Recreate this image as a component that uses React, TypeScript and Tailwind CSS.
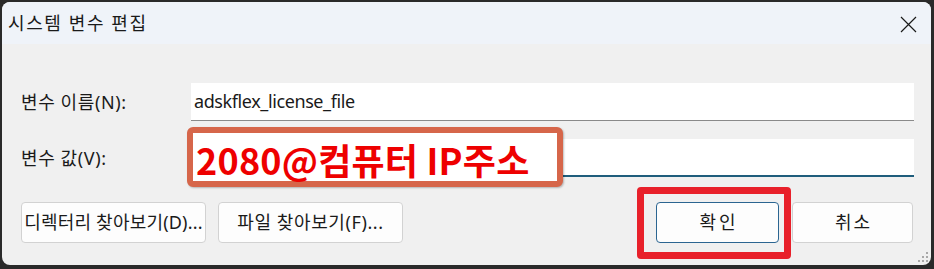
import React from "react";

const font = { fontFamily: '"Noto Sans", "Noto Sans CJK KR", sans-serif' };

export default function App() {
  return (
    <div
      className="w-[934px] h-[269px] bg-[#2a2a2a] pt-[2px] pl-[2px] overflow-hidden"
      style={font}
    >
      <div className="relative w-[929px] h-[263px] rounded-[8px] overflow-hidden bg-[#f0f0f0] flex flex-col">
        {/* Title bar */}
        <div className="h-[42px] bg-[#eff3f9] flex items-center justify-between pl-[6px] pr-[14px] shrink-0">
          <span className="text-[18px] text-[#1a1a1a] leading-none tracking-[1.6px]">시스템 변수 편집</span>
          <svg width="17" height="17" viewBox="0 0 17 17" className="mt-[2px]">
            <path d="M1 1 L16 16 M16 1 L1 16" stroke="#1a1a1a" strokeWidth="1.2" fill="none" />
          </svg>
        </div>

        {/* Body */}
        <div className="flex flex-col pl-[19px] pr-[17px] pt-[39px]">
          <div className="flex items-center h-[38px]">
            <div className="w-[170px] text-[18px] text-[#1a1a1a] leading-none tracking-[0.6px]">변수 이름(N):</div>
            <div className="flex-1 h-[38px] bg-white border-b border-[#8a8a8a] flex items-center pl-[3px] text-[18px] text-[#1a1a1a] tracking-[-0.4px]">
              adskflex_license_file
            </div>
          </div>
          <div className="flex items-center h-[38px] mt-[18px]">
            <div className="w-[170px] text-[18px] text-[#1a1a1a] leading-none tracking-[0.6px]">변수 값(V):</div>
            <div className="flex-1 h-[38px] bg-white border-b-2 border-[#1f5d7c]" />
          </div>

          {/* Buttons */}
          <div className="flex items-center mt-[25px] pr-[1px]">
            <button className="w-[185px] h-[41px] bg-[#fdfdfd] border border-[#d2d2d2] rounded-[4px] text-[18px] text-[#1a1a1a] whitespace-nowrap overflow-hidden flex items-center justify-center tracking-[0.2px]">
              디렉터리 찾아보기(D)...
            </button>
            <button className="ml-[12px] w-[185px] h-[41px] bg-[#fdfdfd] border border-[#d2d2d2] rounded-[4px] text-[18px] text-[#1a1a1a] whitespace-nowrap flex items-center justify-center tracking-[0.6px]">
              파일 찾아보기(F)...
            </button>
            <div className="flex-1" />
            <button className="w-[123px] h-[41px] bg-[#fdfdfd] border border-[#2b6591] rounded-[4px] text-[18px] text-[#1a1a1a] flex items-center justify-center tracking-[3px] pl-[3px]">
              확인
            </button>
            <button className="ml-[13px] w-[121px] h-[41px] bg-[#fdfdfd] border border-[#d2d2d2] rounded-[4px] text-[18px] text-[#1a1a1a] flex items-center justify-center tracking-[2px] pl-[2px]">
              취소
            </button>
          </div>
        </div>

        {/* Annotation overlay box */}
        <div
          className="absolute left-[185px] top-[125px] w-[376px] h-[60px] bg-white border-[6px] border-[#d6664a] rounded-[6px] shadow-[1px_1px_2px_rgba(0,0,0,0.25)] flex items-center pl-[3px]"
        >
          <span
            className="text-[36px] font-bold text-[#ee0000] leading-none whitespace-nowrap tracking-[0.2px] mt-[3px]"
            style={{ fontFamily: '"Noto Sans CJK KR", "Noto Sans", sans-serif' }}
          >
            2080@컴퓨터 IP주소
          </span>
        </div>

        {/* Red highlight rectangle */}
        <div className="absolute left-[635px] top-[185px] w-[154px] h-[72px] border-[7px] border-[#e8202a] rounded-[4px]" />

        {/* Resize grip */}
        <div className="absolute right-[3px] bottom-[3px] w-[10px] h-[10px]">
          <div className="absolute right-0 bottom-0 w-[2px] h-[2px] bg-[#a8a8a8]" />
          <div className="absolute right-[4px] bottom-0 w-[2px] h-[2px] bg-[#a8a8a8]" />
          <div className="absolute right-[8px] bottom-0 w-[2px] h-[2px] bg-[#a8a8a8]" />
          <div className="absolute right-0 bottom-[4px] w-[2px] h-[2px] bg-[#a8a8a8]" />
          <div className="absolute right-[4px] bottom-[4px] w-[2px] h-[2px] bg-[#a8a8a8]" />
          <div className="absolute right-0 bottom-[8px] w-[2px] h-[2px] bg-[#a8a8a8]" />
        </div>
      </div>
    </div>
  );
}
